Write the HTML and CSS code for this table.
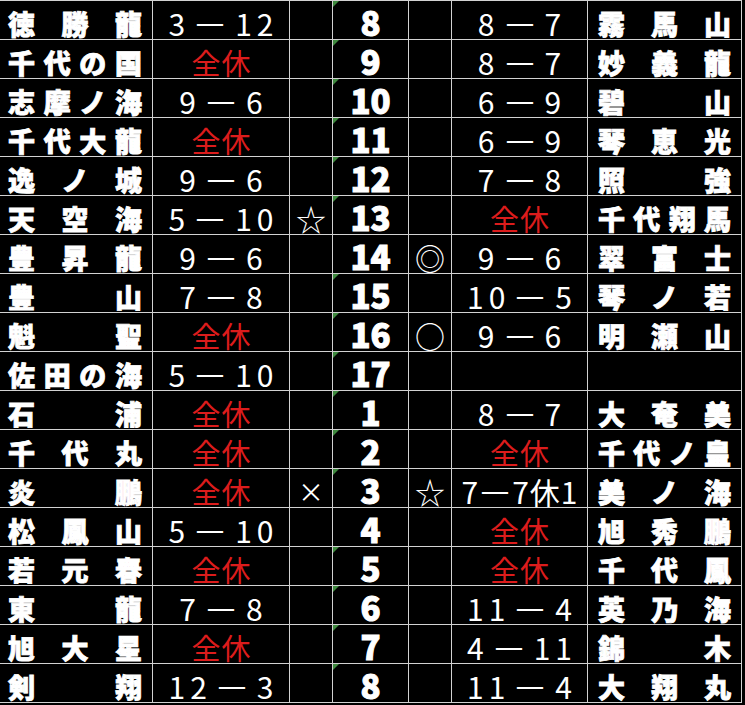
FILE: index.html
```html
<!DOCTYPE html>
<html lang="ja">
<head>
<meta charset="utf-8">
<title>星取表</title>
<link rel="stylesheet" href="styles.css">
</head>
<body>
<div class="sheet">
  <div class="row"><div class="nm"><span>徳</span><span>勝</span><span>龍</span></div><div class="sc">3<span class="d">－</span>12</div><div class="mk"></div><div class="rk tri">8</div><div class="mk"></div><div class="sc">8<span class="d">－</span>7</div><div class="nm r"><span>霧</span><span>馬</span><span>山</span></div></div>
  <div class="row"><div class="nm"><span>千</span><span>代</span><span>の</span><span>国</span></div><div class="sc red">全休</div><div class="mk"></div><div class="rk tri">9</div><div class="mk"></div><div class="sc">8<span class="d">－</span>7</div><div class="nm r"><span>妙</span><span>義</span><span>龍</span></div></div>
  <div class="row"><div class="nm"><span>志</span><span>摩</span><span>ノ</span><span>海</span></div><div class="sc">9<span class="d">－</span>6</div><div class="mk"></div><div class="rk tri">10</div><div class="mk"></div><div class="sc">6<span class="d">－</span>9</div><div class="nm r"><span>碧</span><span>山</span></div></div>
  <div class="row"><div class="nm"><span>千</span><span>代</span><span>大</span><span>龍</span></div><div class="sc red">全休</div><div class="mk"></div><div class="rk tri">11</div><div class="mk"></div><div class="sc">6<span class="d">－</span>9</div><div class="nm r"><span>琴</span><span>恵</span><span>光</span></div></div>
  <div class="row"><div class="nm"><span>逸</span><span>ノ</span><span>城</span></div><div class="sc">9<span class="d">－</span>6</div><div class="mk"></div><div class="rk tri">12</div><div class="mk"></div><div class="sc">7<span class="d">－</span>8</div><div class="nm r"><span>照</span><span>強</span></div></div>
  <div class="row"><div class="nm"><span>天</span><span>空</span><span>海</span></div><div class="sc">5<span class="d">－</span>10</div><div class="mk">☆</div><div class="rk tri">13</div><div class="mk"></div><div class="sc red">全休</div><div class="nm r"><span>千</span><span>代</span><span>翔</span><span>馬</span></div></div>
  <div class="row"><div class="nm"><span>豊</span><span>昇</span><span>龍</span></div><div class="sc">9<span class="d">－</span>6</div><div class="mk"></div><div class="rk">14</div><div class="mk">◎</div><div class="sc">9<span class="d">－</span>6</div><div class="nm r"><span>翠</span><span>富</span><span>士</span></div></div>
  <div class="row"><div class="nm"><span>豊</span><span>山</span></div><div class="sc">7<span class="d">－</span>8</div><div class="mk"></div><div class="rk tri">15</div><div class="mk"></div><div class="sc">10<span class="d">－</span>5</div><div class="nm r"><span>琴</span><span>ノ</span><span>若</span></div></div>
  <div class="row"><div class="nm"><span>魁</span><span>聖</span></div><div class="sc red">全休</div><div class="mk"></div><div class="rk tri">16</div><div class="mk">○</div><div class="sc">9<span class="d">－</span>6</div><div class="nm r"><span>明</span><span>瀬</span><span>山</span></div></div>
  <div class="row"><div class="nm"><span>佐</span><span>田</span><span>の</span><span>海</span></div><div class="sc">5<span class="d">－</span>10</div><div class="mk"></div><div class="rk tri">17</div><div class="mk"></div><div class="sc"></div><div class="nm r"></div></div>
  <div class="row"><div class="nm"><span>石</span><span>浦</span></div><div class="sc red">全休</div><div class="mk"></div><div class="rk tri">1</div><div class="mk"></div><div class="sc">8<span class="d">－</span>7</div><div class="nm r"><span>大</span><span>奄</span><span>美</span></div></div>
  <div class="row"><div class="nm"><span>千</span><span>代</span><span>丸</span></div><div class="sc red">全休</div><div class="mk"></div><div class="rk tri">2</div><div class="mk"></div><div class="sc red">全休</div><div class="nm r"><span>千</span><span>代</span><span>ノ</span><span>皇</span></div></div>
  <div class="row"><div class="nm"><span>炎</span><span>鵬</span></div><div class="sc red">全休</div><div class="mk x">×</div><div class="rk tri">3</div><div class="mk">☆</div><div class="sc tight">7<span class="d">－</span>7休1</div><div class="nm r"><span>美</span><span>ノ</span><span>海</span></div></div>
  <div class="row"><div class="nm"><span>松</span><span>鳳</span><span>山</span></div><div class="sc">5<span class="d">－</span>10</div><div class="mk"></div><div class="rk">4</div><div class="mk"></div><div class="sc red">全休</div><div class="nm r"><span>旭</span><span>秀</span><span>鵬</span></div></div>
  <div class="row"><div class="nm"><span>若</span><span>元</span><span>春</span></div><div class="sc red">全休</div><div class="mk"></div><div class="rk tri">5</div><div class="mk"></div><div class="sc red">全休</div><div class="nm r"><span>千</span><span>代</span><span>鳳</span></div></div>
  <div class="row"><div class="nm"><span>東</span><span>龍</span></div><div class="sc">7<span class="d">－</span>8</div><div class="mk"></div><div class="rk tri">6</div><div class="mk"></div><div class="sc">11<span class="d">－</span>4</div><div class="nm r"><span>英</span><span>乃</span><span>海</span></div></div>
  <div class="row"><div class="nm"><span>旭</span><span>大</span><span>星</span></div><div class="sc red">全休</div><div class="mk"></div><div class="rk tri">7</div><div class="mk"></div><div class="sc">4<span class="d">－</span>11</div><div class="nm r"><span>錦</span><span>木</span></div></div>
  <div class="row"><div class="nm"><span>剣</span><span>翔</span></div><div class="sc">12<span class="d">－</span>3</div><div class="mk"></div><div class="rk tri">8</div><div class="mk"></div><div class="sc">11<span class="d">－</span>4</div><div class="nm r"><span>大</span><span>翔</span><span>丸</span></div></div>
</div>
</body>
</html>
```
FILE: styles.css
```css
html, body {
  margin: 0;
  padding: 0;
  background: #000;
}

.sheet {
  display: grid;
  grid-template-columns: 152px 136px 42px 75px 42px 135px 153px;
  grid-auto-rows: 38px;
  gap: 1px;
  padding: 1px 1px 1px 0;
  width: max-content;
  background: #d2d2d2;
}

.row {
  display: contents;
}

.row > div {
  background: #000;
  color: #fff;
  display: flex;
  align-items: center;
}

.nm {
  justify-content: space-between;
  padding: 6px 10px 0 8px;
  font-family: "Noto Sans CJK JP", sans-serif;
  font-weight: 900;
  font-size: 27px;
  line-height: 1;
  -webkit-text-stroke: 0.8px #fff;
}

.nm.r {
  padding: 6px 10px 0 10px;
}

.sc {
  justify-content: center;
  padding-top: 6px;
  font-family: "Noto Sans CJK JP", sans-serif;
  font-weight: 400;
  font-size: 30px;
  line-height: 1;
  letter-spacing: 5px;
  text-indent: 5px;
}

.sc .d {
  display: inline-block;
  transform: scaleX(1.2);
}

.sc.tight {
  letter-spacing: 1px;
  text-indent: 1px;
}

.sc.red {
  color: #dc1c1c;
  letter-spacing: 1px;
  text-indent: 1px;
  font-size: 29px;
}

.mk {
  justify-content: center;
  padding-top: 5px;
  font-family: "Noto Sans CJK JP", sans-serif;
  font-size: 30px;
  line-height: 1;
}

.mk.x {
  font-size: 26px;
}

.rk {
  position: relative;
  justify-content: center;
  padding-top: 5px;
  font-family: "Noto Sans CJK JP", sans-serif;
  font-weight: 900;
  font-size: 33px;
  line-height: 1;
  -webkit-text-stroke: 1px #fff;
}

.rk.tri::before {
  content: "";
  position: absolute;
  top: 0;
  left: 0;
  border-top: 6px solid #3f8a3f;
  border-right: 6px solid transparent;
}
```
